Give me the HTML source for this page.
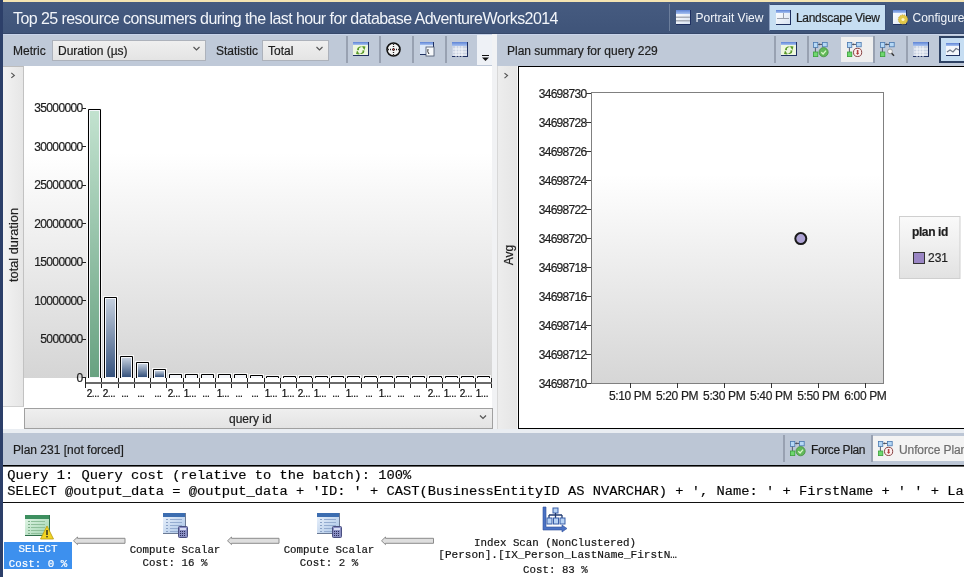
<!DOCTYPE html><html><head><meta charset="utf-8"><style>
*{margin:0;padding:0;box-sizing:border-box}
html,body{width:964px;height:577px;overflow:hidden;background:#fff;font-family:"Liberation Sans",sans-serif;font-size:12px;color:#1e1e1e}
.a{position:absolute}
.t{position:absolute;white-space:pre;line-height:1;-webkit-text-stroke:0.2px currentColor}
.mono{font-family:"Liberation Mono",monospace}
svg{position:absolute;left:0;top:0}
svg text{font-family:"Liberation Sans",sans-serif;stroke:#1e1e1e;stroke-width:0.2px}
svg text.w{stroke:#fff}
svg .m text, svg text.q{font-family:"Liberation Mono",monospace}
</style></head><body><div id="root" style="position:absolute;left:0;top:0;width:964px;height:577px;overflow:hidden;will-change:transform">
<div class="a" style="left:0px;top:0px;width:964px;height:2px;background:#f4e4b2"></div>
<div class="a" style="left:0px;top:2px;width:964px;height:32px;background:linear-gradient(#465b80,#3f5479);border-bottom:1px solid #36486a"></div>
<div class="t" style="left:13px;top:11px;font-size:16px;letter-spacing:-0.57px;color:#f2f5fa;-webkit-text-stroke:0">Top 25 resource consumers during the last hour for database AdventureWorks2014</div>
<div class="a" style="left:669px;top:4px;width:1px;height:27px;background:#6c7e9c"></div>
<div class="t" style="left:695.6px;top:12px;color:#f2f5fa;-webkit-text-stroke:0">Portrait View</div>
<div class="a" style="left:769px;top:4px;width:117px;height:27px;background:#c6def2;border:1px solid #3a5078;border-left-color:#8ea1c1"></div>
<div class="t" style="left:796px;top:12px;color:#1e1e1e;letter-spacing:-0.3px">Landscape View</div>
<div class="t" style="left:912.5px;top:12px;color:#f2f5fa;-webkit-text-stroke:0">Configure</div>
<div class="a" style="left:0px;top:34px;width:964px;height:32px;background:#bfc9d8;border-top:1px solid #c8d4ea"></div>
<div class="t" style="left:13px;top:45px;">Metric</div>
<div class="a" style="left:52px;top:40px;width:154px;height:21px;background:linear-gradient(#efefef,#e4e4e4);border:1px solid #adb2bb"></div>
<div class="t" style="left:58px;top:45px;">Duration (µs)</div>
<div class="t" style="left:216px;top:45px;">Statistic</div>
<div class="a" style="left:262px;top:40px;width:67px;height:21px;background:linear-gradient(#efefef,#e4e4e4);border:1px solid #adb2bb"></div>
<div class="t" style="left:268px;top:45px;">Total</div>
<div class="a" style="left:346px;top:36px;width:2px;height:27px;background:#98a1b1"></div>
<div class="a" style="left:379px;top:36px;width:2px;height:27px;background:#98a1b1"></div>
<div class="a" style="left:412px;top:36px;width:2px;height:27px;background:#98a1b1"></div>
<div class="a" style="left:445px;top:36px;width:2px;height:27px;background:#98a1b1"></div>
<div class="a" style="left:774px;top:36px;width:2px;height:27px;background:#98a1b1"></div>
<div class="a" style="left:807px;top:36px;width:2px;height:27px;background:#98a1b1"></div>
<div class="a" style="left:873px;top:36px;width:2px;height:27px;background:#98a1b1"></div>
<div class="a" style="left:906px;top:36px;width:2px;height:27px;background:#98a1b1"></div>
<div class="a" style="left:477px;top:35px;width:15px;height:30px;background:#eef1f6"></div>
<div class="a" style="left:492px;top:34px;width:5px;height:399px;background:#f1f2f4"></div>
<div class="t" style="left:507px;top:45px;">Plan summary for query 229</div>
<div class="a" style="left:841px;top:37px;width:32px;height:25px;background:#efefef"></div>
<div class="a" style="left:939px;top:36px;width:30px;height:27px;background:#c6ddf2;border:2px solid #2d4163"></div>
<div class="a" style="left:3px;top:66px;width:21px;height:341px;background:linear-gradient(90deg,#f2f2f2,#e6e6e6);border-top:1px solid #bdbdbd;border-right:1px solid #c2c2c2;border-bottom:1px solid #d0d0d0"></div>
<div class="a" style="left:24px;top:66px;width:468px;height:312px;background:linear-gradient(#ffffff 0%,#ffffff 28%,#d5d5d5 100%)"></div>
<div class="a" style="left:24px;top:408px;width:469px;height:21px;background:linear-gradient(#efefef,#e3e3e3);border:1px solid #a0a0a0"></div>
<div class="t" style="left:229px;top:413px;">query id</div>
<div class="a" style="left:497px;top:66px;width:21px;height:363px;background:linear-gradient(90deg,#ededed,#e5e5e5);border-left:1px solid #d8d8d8;border-right:1px solid #f6f6f6"></div>
<div class="a" style="left:518px;top:66px;width:450px;height:363px;background:#fff;border:1px solid #000;border-width:1px 0 1px 1px"></div>
<div class="a" style="left:591px;top:92px;width:293px;height:292px;background:linear-gradient(#ffffff 0%,#ffffff 28%,#d6d6d6 100%);border:1px solid #808080"></div>
<div class="a" style="left:0px;top:429px;width:964px;height:4px;background:#e9edf2"></div>
<div class="a" style="left:0px;top:433px;width:964px;height:32px;background:#bcc6d5"></div>
<div class="t" style="left:13px;top:444px;">Plan 231 [not forced]</div>
<div class="a" style="left:783px;top:435px;width:2px;height:27px;background:#98a1b1"></div>
<div class="a" style="left:871px;top:435px;width:2px;height:27px;background:#98a1b1"></div>
<div class="a" style="left:873px;top:436px;width:95px;height:25px;background:#f3f3f3"></div>
<div class="t" style="left:811px;top:444px;letter-spacing:-0.4px">Force Plan</div>
<div class="t" style="left:899px;top:444px;letter-spacing:-0.1px;color:#6d6d6d">Unforce Plan</div>
<div class="a" style="left:0px;top:465px;width:964px;height:1px;background:#000"></div>
<div class="a" style="left:0px;top:466px;width:964px;height:1px;background:#666"></div>
<div class="a" style="left:0px;top:502px;width:964px;height:1px;background:#111"></div>
<div class="a" style="left:4px;top:542px;width:68px;height:27px;background:#3d90ee"></div>
<svg width="964" height="577" viewBox="0 0 964 577"><defs>
<linearGradient id="iBlue" x1="0" y1="0" x2="0" y2="1"><stop offset="0" stop-color="#5d83d6"/><stop offset="1" stop-color="#a8c2f0"/></linearGradient>
<linearGradient id="iWin" x1="0" y1="0" x2="1" y2="1"><stop offset="0" stop-color="#ffffff"/><stop offset="1" stop-color="#d9e3f2"/></linearGradient>
<linearGradient id="iGrn" x1="0" y1="0" x2="1" y2="1"><stop offset="0" stop-color="#b6f0a0"/><stop offset="1" stop-color="#3a9a3a"/></linearGradient>
<linearGradient id="iTblG" x1="0" y1="0" x2="1" y2="1"><stop offset="0" stop-color="#e6f7ea"/><stop offset="1" stop-color="#9fd4ae"/></linearGradient>
<linearGradient id="iTblB" x1="0" y1="0" x2="1" y2="1"><stop offset="0" stop-color="#eef4fc"/><stop offset="1" stop-color="#a9c4e6"/></linearGradient>
<linearGradient id="gG" x1="0" y1="0" x2="0" y2="1"><stop offset="0" stop-color="#c2e2cf"/><stop offset="1" stop-color="#68a281"/></linearGradient><linearGradient id="gB" x1="0" y1="0" x2="0" y2="1"><stop offset="0" stop-color="#c3cedd"/><stop offset="1" stop-color="#34517c"/></linearGradient><linearGradient id="gL" x1="0" y1="0" x2="0" y2="1"><stop offset="0" stop-color="#fafafa"/><stop offset="1" stop-color="#e2e2e2"/></linearGradient></defs><g transform="translate(676 10)"><rect x="0" y="0" width="15" height="15" fill="#1f3060"/><rect x="0" y="0" width="14" height="14" fill="url(#iWin)"/><rect x="0" y="0" width="14" height="4" fill="url(#iBlue)"/><rect x="0" y="6.5" width="14" height="1.5" fill="#a9aeb8"/><rect x="0" y="10" width="14" height="1.5" fill="#a9aeb8"/></g><g transform="translate(776 10)"><rect x="0" y="0" width="15" height="15" fill="#1f3060"/><rect x="0" y="0" width="14" height="14" fill="url(#iWin)"/><rect x="0" y="0" width="14" height="3" fill="url(#iBlue)"/><rect x="1" y="8" width="12" height="1" fill="#9aa0ad"/><rect x="7" y="3" width="1" height="5" fill="#9aa0ad"/></g><g transform="translate(893 10)"><rect x="0" y="0" width="14" height="15" fill="#1f3060"/><rect x="0" y="0" width="13" height="14" fill="url(#iWin)"/><rect x="0" y="0" width="13" height="3" fill="url(#iBlue)"/><circle cx="10" cy="9.5" r="4.6" fill="#e2c84a" stroke="#c9a526" stroke-width="1" stroke-dasharray="1.2 1"/><circle cx="10" cy="9.5" r="1.6" fill="#fff6c0"/></g><g transform="translate(353 42)"><rect x="0" y="0" width="16" height="14" fill="#1f3060"/><rect x="0" y="0" width="15" height="13" fill="#eef7e0"/><rect x="0" y="0" width="15" height="3" fill="url(#iBlue)"/><path d="M4 8 A3.5 3.5 0 0 1 10 5.5 L9 4 L12.5 4.5 L11.5 8 L10.5 6.8 A2.3 2.3 0 0 0 6 8.2 Z" fill="#5a9a2a"/><path d="M11.5 8.5 A3.5 3.5 0 0 1 5.5 11 L6.5 12.5 L3 12 L4 8.5 L5 9.7 A2.3 2.3 0 0 0 9.5 8.3 Z" fill="#5a9a2a"/></g><g transform="translate(386 42)"><circle cx="7.5" cy="7.5" r="6.5" fill="#f4f4f4" stroke="#111" stroke-width="1.6"/><path d="M7.5 2 V13 M2 7.5 H13" stroke="#222" stroke-width="1.3" stroke-dasharray="1 1"/><rect x="6.8" y="6.8" width="1.4" height="1.4" fill="#d04040"/></g><g transform="translate(420 42)"><rect x="0" y="0" width="14" height="13" fill="#1f3060"/><rect x="0" y="0" width="13" height="12" fill="#dde8f8"/><rect x="0" y="0" width="13" height="3" fill="url(#iBlue)"/><rect x="6" y="5" width="8" height="9" fill="#f6f8fb" stroke="#44506a" stroke-width="0.8"/><path d="M8 7 Q7 10 9 12" stroke="#333" stroke-width="1" fill="none"/></g><g transform="translate(452 42)"><rect x="0" y="0" width="16" height="15" fill="#1f3060"/><rect x="0" y="0" width="15" height="14" fill="#c9d2e2"/><rect x="0" y="0" width="15" height="4" fill="url(#iBlue)"/><path d="M1 7H15 M1 10H15 M1 13H15 M4 4V15 M7 4V15 M10 4V15" stroke="#f4f6fa" stroke-width="1"/></g><g transform="translate(781 42)"><rect x="0" y="0" width="16" height="14" fill="#1f3060"/><rect x="0" y="0" width="15" height="13" fill="#eef7e0"/><rect x="0" y="0" width="15" height="3" fill="url(#iBlue)"/><path d="M4 8 A3.5 3.5 0 0 1 10 5.5 L9 4 L12.5 4.5 L11.5 8 L10.5 6.8 A2.3 2.3 0 0 0 6 8.2 Z" fill="#5a9a2a"/><path d="M11.5 8.5 A3.5 3.5 0 0 1 5.5 11 L6.5 12.5 L3 12 L4 8.5 L5 9.7 A2.3 2.3 0 0 0 9.5 8.3 Z" fill="#5a9a2a"/></g><g transform="translate(813 42)"><rect x="0.4" y="0.4" width="4.4" height="5" fill="#b5d8f6" stroke="#4a78b0" stroke-width="0.8"/><rect x="9.4" y="0.4" width="4.8" height="4.4" fill="#b5d8f6" stroke="#4a78b0" stroke-width="0.8"/><path d="M5.2 2.4 H9" stroke="#4a5060" stroke-width="1"/><path d="M5.3 2.4 L6.8 1.2 V3.6 Z" fill="#4a5060"/><path d="M2.4 5.6 V10" stroke="#5a6070" stroke-width="1"/><rect x="0.4" y="10" width="4.4" height="4.6" fill="#6fd86f" stroke="#3aa03a" stroke-width="0.8"/><circle cx="10.6" cy="10.2" r="4.6" fill="#62b85a" stroke="#3f8a3a" stroke-width="0.7"/><path d="M8.3 10.2 L10.1 12 L13 8.6" stroke="#d8f8c8" stroke-width="1.3" fill="none"/></g><g transform="translate(847 42)"><rect x="0.4" y="0.4" width="4.4" height="5" fill="#b5d8f6" stroke="#4a78b0" stroke-width="0.8"/><rect x="9.4" y="0.4" width="4.8" height="4.4" fill="#b5d8f6" stroke="#4a78b0" stroke-width="0.8"/><path d="M5.2 2.4 H9" stroke="#4a5060" stroke-width="1"/><path d="M5.3 2.4 L6.8 1.2 V3.6 Z" fill="#4a5060"/><path d="M2.4 5.6 V10" stroke="#5a6070" stroke-width="1"/><rect x="0.4" y="10" width="4.4" height="4.6" fill="#6fd86f" stroke="#3aa03a" stroke-width="0.8"/><circle cx="10.6" cy="10.4" r="4.1" fill="#fdf0f0" stroke="#7a3030" stroke-width="0.9"/><path d="M10.6 8 V11.5" stroke="#b04040" stroke-width="1.6"/><path d="M9 11 L10.6 13 L12.2 11 Z" fill="#b04040"/></g><g transform="translate(880 42)"><rect x="0.4" y="0.4" width="4.4" height="5" fill="#b5d8f6" stroke="#4a78b0" stroke-width="0.8"/><rect x="9.4" y="0.4" width="4.8" height="4.4" fill="#b5d8f6" stroke="#4a78b0" stroke-width="0.8"/><path d="M5.2 2.4 H9" stroke="#4a5060" stroke-width="1"/><path d="M5.3 2.4 L6.8 1.2 V3.6 Z" fill="#4a5060"/><path d="M2.4 5.6 V10" stroke="#5a6070" stroke-width="1"/><rect x="0.4" y="10" width="4.4" height="4.6" fill="#6fd86f" stroke="#3aa03a" stroke-width="0.8"/><circle cx="10" cy="9.4" r="2.4" fill="#f4f4f4" stroke="#9a9a9a" stroke-width="0.9"/><path d="M11.6 11.2 L14 13.8" stroke="#333" stroke-width="1.5"/></g><g transform="translate(913 42)"><rect x="0" y="0" width="16" height="15" fill="#1f3060"/><rect x="0" y="0" width="15" height="14" fill="#c9d2e2"/><rect x="0" y="0" width="15" height="4" fill="url(#iBlue)"/><path d="M1 7H15 M1 10H15 M1 13H15 M4 4V15 M7 4V15 M10 4V15" stroke="#f4f6fa" stroke-width="1"/></g><g transform="translate(946 43)"><rect x="0" y="0" width="14" height="13" fill="#1f3060"/><rect x="0" y="0" width="13" height="12" fill="#f3f6fb"/><rect x="0" y="0" width="13" height="3" fill="url(#iBlue)"/><path d="M1 9 L4 7 L7 9 L10 5.5 L13 7" stroke="#707888" stroke-width="1.2" fill="none"/></g><g transform="translate(790 441)"><rect x="0.4" y="0.4" width="4.4" height="5" fill="#b5d8f6" stroke="#4a78b0" stroke-width="0.8"/><rect x="9.4" y="0.4" width="4.8" height="4.4" fill="#b5d8f6" stroke="#4a78b0" stroke-width="0.8"/><path d="M5.2 2.4 H9" stroke="#4a5060" stroke-width="1"/><path d="M5.3 2.4 L6.8 1.2 V3.6 Z" fill="#4a5060"/><path d="M2.4 5.6 V10" stroke="#5a6070" stroke-width="1"/><rect x="0.4" y="10" width="4.4" height="4.6" fill="#6fd86f" stroke="#3aa03a" stroke-width="0.8"/><circle cx="10.6" cy="10.2" r="4.6" fill="#62b85a" stroke="#3f8a3a" stroke-width="0.7"/><path d="M8.3 10.2 L10.1 12 L13 8.6" stroke="#d8f8c8" stroke-width="1.3" fill="none"/></g><g transform="translate(878 441)"><rect x="0.4" y="0.4" width="4.4" height="5" fill="#b5d8f6" stroke="#4a78b0" stroke-width="0.8"/><rect x="9.4" y="0.4" width="4.8" height="4.4" fill="#b5d8f6" stroke="#4a78b0" stroke-width="0.8"/><path d="M5.2 2.4 H9" stroke="#4a5060" stroke-width="1"/><path d="M5.3 2.4 L6.8 1.2 V3.6 Z" fill="#4a5060"/><path d="M2.4 5.6 V10" stroke="#5a6070" stroke-width="1"/><rect x="0.4" y="10" width="4.4" height="4.6" fill="#6fd86f" stroke="#3aa03a" stroke-width="0.8"/><circle cx="10.6" cy="10.4" r="4.1" fill="#fdf0f0" stroke="#7a3030" stroke-width="0.9"/><path d="M10.6 8 V11.5" stroke="#b04040" stroke-width="1.6"/><path d="M9 11 L10.6 13 L12.2 11 Z" fill="#b04040"/></g><path d="M193.5 47.0 L196.5 50.0 L199.5 47.0" stroke="#555" stroke-width="1.2" fill="none"/><path d="M316.5 47.0 L319.5 50.0 L322.5 47.0" stroke="#555" stroke-width="1.2" fill="none"/><path d="M480 415.5 L483 418.5 L486 415.5" stroke="#555" stroke-width="1.2" fill="none"/><path d="M11.3 72.9 L14.3 75.4 L11.3 77.9" stroke="#555" stroke-width="1.2" fill="none"/><path d="M504.5 73.1 L507.5 75.6 L504.5 78.1" stroke="#555" stroke-width="1.2" fill="none"/><rect x="482" y="55" width="7" height="1" fill="#111"/><path d="M482 57.5 H489 L485.5 61 Z" fill="#111"/><g font-size="12" fill="#1e1e1e" letter-spacing="-0.65"><text x="82.5" y="112.3" text-anchor="end">35000000</text><rect x="82" y="108" width="4" height="1" fill="#222"/><text x="82.5" y="150.8" text-anchor="end">30000000</text><rect x="82" y="146" width="4" height="1" fill="#222"/><text x="82.5" y="189.3" text-anchor="end">25000000</text><rect x="82" y="185" width="4" height="1" fill="#222"/><text x="82.5" y="227.8" text-anchor="end">20000000</text><rect x="82" y="223" width="4" height="1" fill="#222"/><text x="82.5" y="266.3" text-anchor="end">15000000</text><rect x="82" y="262" width="4" height="1" fill="#222"/><text x="82.5" y="304.8" text-anchor="end">10000000</text><rect x="82" y="300" width="4" height="1" fill="#222"/><text x="82.5" y="343.3" text-anchor="end">5000000</text><rect x="82" y="339" width="4" height="1" fill="#222"/><text x="82.5" y="381.8" text-anchor="end">0</text><rect x="82" y="377" width="4" height="1" fill="#222"/></g><rect x="87" y="108" width="15" height="270" fill="#fbfbfb" opacity="0.85"/><path d="M88.5 378 V109.5 H100.5 V378" fill="none" stroke="#000" stroke-width="1"/><rect x="89" y="110" width="11" height="268" fill="#f4f6fa"/><rect x="90" y="111" width="9" height="266" fill="url(#gG)"/><rect x="85" y="378" width="1" height="10" fill="#222"/><text x="92.9" y="397.2" text-anchor="middle" font-size="10" letter-spacing="-0.35" fill="#000">2...</text><rect x="103" y="296" width="15" height="82" fill="#fbfbfb" opacity="0.85"/><path d="M104.5 378 V297.5 H116.5 V378" fill="none" stroke="#000" stroke-width="1"/><rect x="105" y="298" width="11" height="80" fill="#f4f6fa"/><rect x="106" y="299" width="9" height="78" fill="url(#gB)"/><rect x="101" y="378" width="1" height="10" fill="#222"/><text x="108.9" y="397.2" text-anchor="middle" font-size="10" letter-spacing="-0.35" fill="#000">2...</text><rect x="119" y="355" width="15" height="23" fill="#fbfbfb" opacity="0.85"/><path d="M120.5 378 V356.5 H132.5 V378" fill="none" stroke="#000" stroke-width="1"/><rect x="121" y="357" width="11" height="21" fill="#f4f6fa"/><rect x="122" y="358" width="9" height="19" fill="url(#gB)"/><rect x="118" y="378" width="1" height="10" fill="#222"/><text x="124.9" y="397.2" text-anchor="middle" font-size="10" letter-spacing="-0.35" fill="#000">...</text><rect x="135" y="361" width="15" height="17" fill="#fbfbfb" opacity="0.85"/><path d="M136.5 378 V362.5 H148.5 V378" fill="none" stroke="#000" stroke-width="1"/><rect x="137" y="363" width="11" height="15" fill="#f4f6fa"/><rect x="138" y="364" width="9" height="13" fill="url(#gB)"/><rect x="134" y="378" width="1" height="10" fill="#222"/><text x="140.9" y="397.2" text-anchor="middle" font-size="10" letter-spacing="-0.35" fill="#000">...</text><rect x="152" y="368" width="15" height="10" fill="#fbfbfb" opacity="0.85"/><path d="M153.5 378 V369.5 H165.5 V378" fill="none" stroke="#000" stroke-width="1"/><rect x="154" y="370" width="11" height="8" fill="#f4f6fa"/><rect x="155" y="371" width="9" height="6" fill="url(#gB)"/><rect x="150" y="378" width="1" height="10" fill="#222"/><text x="157.9" y="397.2" text-anchor="middle" font-size="10" letter-spacing="-0.35" fill="#000">...</text><rect x="168" y="373" width="15" height="5" fill="#fbfbfb" opacity="0.85"/><path d="M169.5 378 V374.5 H181.5 V378" fill="none" stroke="#000" stroke-width="1"/><rect x="170" y="375" width="11" height="3" fill="#f4f6fa"/><rect x="166" y="378" width="1" height="10" fill="#222"/><text x="173.9" y="397.2" text-anchor="middle" font-size="10" letter-spacing="-0.35" fill="#000">2...</text><rect x="184" y="373" width="15" height="5" fill="#fbfbfb" opacity="0.85"/><path d="M185.5 378 V374.5 H197.5 V378" fill="none" stroke="#000" stroke-width="1"/><rect x="186" y="375" width="11" height="3" fill="#f4f6fa"/><rect x="183" y="378" width="1" height="10" fill="#222"/><text x="189.9" y="397.2" text-anchor="middle" font-size="10" letter-spacing="-0.35" fill="#000">1...</text><rect x="200" y="373" width="15" height="5" fill="#fbfbfb" opacity="0.85"/><path d="M201.5 378 V374.5 H213.5 V378" fill="none" stroke="#000" stroke-width="1"/><rect x="202" y="375" width="11" height="3" fill="#f4f6fa"/><rect x="199" y="378" width="1" height="10" fill="#222"/><text x="205.9" y="397.2" text-anchor="middle" font-size="10" letter-spacing="-0.35" fill="#000">...</text><rect x="217" y="373" width="15" height="5" fill="#fbfbfb" opacity="0.85"/><path d="M218.5 378 V374.5 H230.5 V378" fill="none" stroke="#000" stroke-width="1"/><rect x="219" y="375" width="11" height="3" fill="#f4f6fa"/><rect x="215" y="378" width="1" height="10" fill="#222"/><text x="222.9" y="397.2" text-anchor="middle" font-size="10" letter-spacing="-0.35" fill="#000">1...</text><rect x="233" y="373" width="15" height="5" fill="#fbfbfb" opacity="0.85"/><path d="M234.5 378 V374.5 H246.5 V378" fill="none" stroke="#000" stroke-width="1"/><rect x="235" y="375" width="11" height="3" fill="#f4f6fa"/><rect x="231" y="378" width="1" height="10" fill="#222"/><text x="238.9" y="397.2" text-anchor="middle" font-size="10" letter-spacing="-0.35" fill="#000">...</text><rect x="249" y="374" width="15" height="4" fill="#fbfbfb" opacity="0.85"/><path d="M250.5 378 V375.5 H262.5 V378" fill="none" stroke="#000" stroke-width="1"/><rect x="251" y="376" width="11" height="2" fill="#f4f6fa"/><rect x="247" y="378" width="1" height="10" fill="#222"/><text x="254.9" y="397.2" text-anchor="middle" font-size="10" letter-spacing="-0.35" fill="#000">...</text><rect x="265" y="375" width="15" height="3" fill="#fbfbfb" opacity="0.85"/><path d="M266.5 378 V376.5 H278.5 V378" fill="none" stroke="#000" stroke-width="1"/><rect x="267" y="377" width="11" height="1" fill="#f4f6fa"/><rect x="264" y="378" width="1" height="10" fill="#222"/><text x="270.9" y="397.2" text-anchor="middle" font-size="10" letter-spacing="-0.35" fill="#000">1...</text><rect x="282" y="375" width="15" height="3" fill="#fbfbfb" opacity="0.85"/><path d="M283.5 378 V376.5 H295.5 V378" fill="none" stroke="#000" stroke-width="1"/><rect x="284" y="377" width="11" height="1" fill="#f4f6fa"/><rect x="280" y="378" width="1" height="10" fill="#222"/><text x="287.9" y="397.2" text-anchor="middle" font-size="10" letter-spacing="-0.35" fill="#000">1...</text><rect x="298" y="375" width="15" height="3" fill="#fbfbfb" opacity="0.85"/><path d="M299.5 378 V376.5 H311.5 V378" fill="none" stroke="#000" stroke-width="1"/><rect x="300" y="377" width="11" height="1" fill="#f4f6fa"/><rect x="296" y="378" width="1" height="10" fill="#222"/><text x="303.9" y="397.2" text-anchor="middle" font-size="10" letter-spacing="-0.35" fill="#000">2...</text><rect x="314" y="375" width="15" height="3" fill="#fbfbfb" opacity="0.85"/><path d="M315.5 378 V376.5 H327.5 V378" fill="none" stroke="#000" stroke-width="1"/><rect x="316" y="377" width="11" height="1" fill="#f4f6fa"/><rect x="312" y="378" width="1" height="10" fill="#222"/><text x="319.9" y="397.2" text-anchor="middle" font-size="10" letter-spacing="-0.35" fill="#000">1...</text><rect x="330" y="375" width="15" height="3" fill="#fbfbfb" opacity="0.85"/><path d="M331.5 378 V376.5 H343.5 V378" fill="none" stroke="#000" stroke-width="1"/><rect x="332" y="377" width="11" height="1" fill="#f4f6fa"/><rect x="329" y="378" width="1" height="10" fill="#222"/><text x="335.9" y="397.2" text-anchor="middle" font-size="10" letter-spacing="-0.35" fill="#000">...</text><rect x="346" y="375" width="15" height="3" fill="#fbfbfb" opacity="0.85"/><path d="M347.5 378 V376.5 H359.5 V378" fill="none" stroke="#000" stroke-width="1"/><rect x="348" y="377" width="11" height="1" fill="#f4f6fa"/><rect x="345" y="378" width="1" height="10" fill="#222"/><text x="351.9" y="397.2" text-anchor="middle" font-size="10" letter-spacing="-0.35" fill="#000">1...</text><rect x="363" y="375" width="15" height="3" fill="#fbfbfb" opacity="0.85"/><path d="M364.5 378 V376.5 H376.5 V378" fill="none" stroke="#000" stroke-width="1"/><rect x="365" y="377" width="11" height="1" fill="#f4f6fa"/><rect x="361" y="378" width="1" height="10" fill="#222"/><text x="368.9" y="397.2" text-anchor="middle" font-size="10" letter-spacing="-0.35" fill="#000">...</text><rect x="379" y="375" width="15" height="3" fill="#fbfbfb" opacity="0.85"/><path d="M380.5 378 V376.5 H392.5 V378" fill="none" stroke="#000" stroke-width="1"/><rect x="381" y="377" width="11" height="1" fill="#f4f6fa"/><rect x="377" y="378" width="1" height="10" fill="#222"/><text x="384.9" y="397.2" text-anchor="middle" font-size="10" letter-spacing="-0.35" fill="#000">1...</text><rect x="395" y="375" width="15" height="3" fill="#fbfbfb" opacity="0.85"/><path d="M396.5 378 V376.5 H408.5 V378" fill="none" stroke="#000" stroke-width="1"/><rect x="397" y="377" width="11" height="1" fill="#f4f6fa"/><rect x="394" y="378" width="1" height="10" fill="#222"/><text x="400.9" y="397.2" text-anchor="middle" font-size="10" letter-spacing="-0.35" fill="#000">...</text><rect x="411" y="375" width="15" height="3" fill="#fbfbfb" opacity="0.85"/><path d="M412.5 378 V376.5 H424.5 V378" fill="none" stroke="#000" stroke-width="1"/><rect x="413" y="377" width="11" height="1" fill="#f4f6fa"/><rect x="410" y="378" width="1" height="10" fill="#222"/><text x="416.9" y="397.2" text-anchor="middle" font-size="10" letter-spacing="-0.35" fill="#000">...</text><rect x="428" y="375" width="15" height="3" fill="#fbfbfb" opacity="0.85"/><path d="M429.5 378 V376.5 H441.5 V378" fill="none" stroke="#000" stroke-width="1"/><rect x="430" y="377" width="11" height="1" fill="#f4f6fa"/><rect x="426" y="378" width="1" height="10" fill="#222"/><text x="433.9" y="397.2" text-anchor="middle" font-size="10" letter-spacing="-0.35" fill="#000">2...</text><rect x="444" y="375" width="15" height="3" fill="#fbfbfb" opacity="0.85"/><path d="M445.5 378 V376.5 H457.5 V378" fill="none" stroke="#000" stroke-width="1"/><rect x="446" y="377" width="11" height="1" fill="#f4f6fa"/><rect x="442" y="378" width="1" height="10" fill="#222"/><text x="449.9" y="397.2" text-anchor="middle" font-size="10" letter-spacing="-0.35" fill="#000">1...</text><rect x="460" y="375" width="15" height="3" fill="#fbfbfb" opacity="0.85"/><path d="M461.5 378 V376.5 H473.5 V378" fill="none" stroke="#000" stroke-width="1"/><rect x="462" y="377" width="11" height="1" fill="#f4f6fa"/><rect x="459" y="378" width="1" height="10" fill="#222"/><text x="465.9" y="397.2" text-anchor="middle" font-size="10" letter-spacing="-0.35" fill="#000">2...</text><rect x="476" y="375" width="15" height="3" fill="#fbfbfb" opacity="0.85"/><path d="M477.5 378 V376.5 H489.5 V378" fill="none" stroke="#000" stroke-width="1"/><rect x="478" y="377" width="11" height="1" fill="#f4f6fa"/><rect x="475" y="378" width="1" height="10" fill="#222"/><text x="481.9" y="397.2" text-anchor="middle" font-size="10" letter-spacing="-0.35" fill="#000">1...</text><rect x="491" y="378" width="1" height="10" fill="#222"/><rect x="86" y="382" width="406" height="2" fill="#6a6a6a"/><text x="18.3" y="245" font-size="12.8" text-anchor="middle" transform="rotate(-90 18.3 245)" fill="#1e1e1e">total duration</text><text x="513" y="255" font-size="12" text-anchor="middle" transform="rotate(-90 513 255)" fill="#1e1e1e">Avg</text><g font-size="12" fill="#1e1e1e" letter-spacing="-0.7"><text x="586.5" y="97.8" text-anchor="end">34698730</text><rect x="586" y="93" width="5" height="1" fill="#333"/><text x="586.5" y="126.8" text-anchor="end">34698728</text><rect x="586" y="122" width="5" height="1" fill="#333"/><text x="586.5" y="155.8" text-anchor="end">34698726</text><rect x="586" y="151" width="5" height="1" fill="#333"/><text x="586.5" y="184.8" text-anchor="end">34698724</text><rect x="586" y="180" width="5" height="1" fill="#333"/><text x="586.5" y="213.8" text-anchor="end">34698722</text><rect x="586" y="209" width="5" height="1" fill="#333"/><text x="586.5" y="242.8" text-anchor="end">34698720</text><rect x="586" y="238" width="5" height="1" fill="#333"/><text x="586.5" y="271.8" text-anchor="end">34698718</text><rect x="586" y="267" width="5" height="1" fill="#333"/><text x="586.5" y="300.8" text-anchor="end">34698716</text><rect x="586" y="296" width="5" height="1" fill="#333"/><text x="586.5" y="329.8" text-anchor="end">34698714</text><rect x="586" y="325" width="5" height="1" fill="#333"/><text x="586.5" y="358.8" text-anchor="end">34698712</text><rect x="586" y="354" width="5" height="1" fill="#333"/><text x="586.5" y="387.8" text-anchor="end">34698710</text><rect x="586" y="383" width="5" height="1" fill="#333"/><rect x="630" y="383" width="1" height="5" fill="#333"/><text x="630.0" y="400" text-anchor="middle" letter-spacing="-0.35">5:10 PM</text><rect x="677" y="383" width="1" height="5" fill="#333"/><text x="677.1" y="400" text-anchor="middle" letter-spacing="-0.35">5:20 PM</text><rect x="724" y="383" width="1" height="5" fill="#333"/><text x="724.2" y="400" text-anchor="middle" letter-spacing="-0.35">5:30 PM</text><rect x="771" y="383" width="1" height="5" fill="#333"/><text x="771.2" y="400" text-anchor="middle" letter-spacing="-0.35">5:40 PM</text><rect x="818" y="383" width="1" height="5" fill="#333"/><text x="818.3" y="400" text-anchor="middle" letter-spacing="-0.35">5:50 PM</text><rect x="865" y="383" width="1" height="5" fill="#333"/><text x="865.4" y="400" text-anchor="middle" letter-spacing="-0.35">6:00 PM</text></g><circle cx="800.8" cy="238.6" r="5.5" fill="#ada2d4" stroke="#1a1a1a" stroke-width="2"/><rect x="899.5" y="216.5" width="60.5" height="62" fill="url(#gL)" stroke="#cfcfcf"/><text x="912" y="236" font-size="12" font-weight="bold" letter-spacing="-0.4" fill="#1e1e1e">plan id</text><rect x="913.5" y="252.5" width="11" height="11" fill="#9a86c4" stroke="#333"/><text x="928" y="262" font-size="12" fill="#1e1e1e">231</text><text class="q" x="7.3" y="479" transform="translate(0 479) scale(1 0.92) translate(0 -479)" font-size="13.75" fill="#000" stroke="#000" stroke-width="0.08">Query 1: Query cost (relative to the batch): 100%</text><text class="q" x="7.3" y="495" transform="translate(0 495) scale(1 0.92) translate(0 -495)" font-size="13.75" fill="#000" stroke="#000" stroke-width="0.08">SELECT @output_data = @output_data + 'ID: ' + CAST(BusinessEntityID AS NVARCHAR) + ', Name: ' + FirstName + ' ' + LastName</text><g transform="translate(25 515)"><rect x="0" y="0" width="25" height="21" fill="#2f6e4a"/><rect x="0" y="0" width="24" height="20" fill="url(#iTblG)"/><rect x="0" y="0" width="24" height="4" fill="#3d8f5f"/><rect x="3" y="6" width="2" height="1" fill="#7fae8a"/><rect x="6" y="6" width="14" height="1" fill="#8fbf9a"/><rect x="3" y="9" width="2" height="1" fill="#7fae8a"/><rect x="6" y="9" width="14" height="1" fill="#8fbf9a"/><rect x="3" y="12" width="2" height="1" fill="#7fae8a"/><rect x="6" y="12" width="14" height="1" fill="#8fbf9a"/><rect x="3" y="15" width="2" height="1" fill="#7fae8a"/><rect x="6" y="15" width="14" height="1" fill="#8fbf9a"/><rect x="3" y="18" width="2" height="1" fill="#7fae8a"/><rect x="6" y="18" width="14" height="1" fill="#8fbf9a"/><path d="M22 11 L28.5 24 L15.5 24 Z" fill="#f2d423" stroke="#b89a10" stroke-width="0.8"/><rect x="21.3" y="15" width="1.4" height="5" fill="#222"/><rect x="21.3" y="21" width="1.4" height="1.4" fill="#222"/></g><g transform="translate(163 513)"><rect x="0" y="0" width="23" height="21" fill="#6b7a94"/><rect x="0" y="0" width="22" height="20" fill="url(#iTblB)"/><rect x="0" y="0" width="22" height="4" fill="#3c6db0"/><rect x="3" y="6" width="2" height="1" fill="#8aa2c6"/><rect x="7" y="6" width="12" height="1" fill="#94acd0"/><rect x="3" y="9" width="2" height="1" fill="#8aa2c6"/><rect x="7" y="9" width="12" height="1" fill="#94acd0"/><rect x="3" y="12" width="2" height="1" fill="#8aa2c6"/><rect x="7" y="12" width="12" height="1" fill="#94acd0"/><rect x="3" y="15" width="2" height="1" fill="#8aa2c6"/><rect x="7" y="15" width="12" height="1" fill="#94acd0"/><rect x="3" y="18" width="2" height="1" fill="#8aa2c6"/><rect x="7" y="18" width="12" height="1" fill="#94acd0"/><rect x="15.5" y="13.5" width="9" height="11" rx="1" fill="#8a8fc4" stroke="#4a4f80"/><rect x="17" y="15" width="6" height="2" fill="#d8dcf4"/><rect x="17" y="18" width="1" height="1" fill="#2a2e5a"/><rect x="19" y="18" width="1" height="1" fill="#2a2e5a"/><rect x="21" y="18" width="1" height="1" fill="#2a2e5a"/><rect x="17" y="20" width="1" height="1" fill="#2a2e5a"/><rect x="19" y="20" width="1" height="1" fill="#2a2e5a"/><rect x="21" y="20" width="1" height="1" fill="#2a2e5a"/><rect x="17" y="22" width="1" height="1" fill="#2a2e5a"/><rect x="19" y="22" width="1" height="1" fill="#2a2e5a"/><rect x="21" y="22" width="1" height="1" fill="#2a2e5a"/></g><g transform="translate(317 513)"><rect x="0" y="0" width="23" height="21" fill="#6b7a94"/><rect x="0" y="0" width="22" height="20" fill="url(#iTblB)"/><rect x="0" y="0" width="22" height="4" fill="#3c6db0"/><rect x="3" y="6" width="2" height="1" fill="#8aa2c6"/><rect x="7" y="6" width="12" height="1" fill="#94acd0"/><rect x="3" y="9" width="2" height="1" fill="#8aa2c6"/><rect x="7" y="9" width="12" height="1" fill="#94acd0"/><rect x="3" y="12" width="2" height="1" fill="#8aa2c6"/><rect x="7" y="12" width="12" height="1" fill="#94acd0"/><rect x="3" y="15" width="2" height="1" fill="#8aa2c6"/><rect x="7" y="15" width="12" height="1" fill="#94acd0"/><rect x="3" y="18" width="2" height="1" fill="#8aa2c6"/><rect x="7" y="18" width="12" height="1" fill="#94acd0"/><rect x="15.5" y="13.5" width="9" height="11" rx="1" fill="#8a8fc4" stroke="#4a4f80"/><rect x="17" y="15" width="6" height="2" fill="#d8dcf4"/><rect x="17" y="18" width="1" height="1" fill="#2a2e5a"/><rect x="19" y="18" width="1" height="1" fill="#2a2e5a"/><rect x="21" y="18" width="1" height="1" fill="#2a2e5a"/><rect x="17" y="20" width="1" height="1" fill="#2a2e5a"/><rect x="19" y="20" width="1" height="1" fill="#2a2e5a"/><rect x="21" y="20" width="1" height="1" fill="#2a2e5a"/><rect x="17" y="22" width="1" height="1" fill="#2a2e5a"/><rect x="19" y="22" width="1" height="1" fill="#2a2e5a"/><rect x="21" y="22" width="1" height="1" fill="#2a2e5a"/></g><g transform="translate(543 507)"><path d="M0 0 H3 V20 H19 V18 L24 21.5 L19 25 V23 H0 Z" fill="#4a72c4" stroke="#2d4f9a" stroke-width="0.6"/><rect x="10" y="1" width="5" height="5" fill="#b6d2f4" stroke="#3a5fa8"/><path d="M12.5 6 V8 M6 8 H19 M6 8V11 M12.5 8V11 M19 8V11" stroke="#203a70" stroke-width="1.3" fill="none"/><rect x="4" y="11" width="5" height="6" fill="#b6d2f4" stroke="#3a5fa8"/><rect x="10.5" y="11" width="5" height="6" fill="#b6d2f4" stroke="#3a5fa8"/><rect x="17" y="11" width="5" height="6" fill="#b6d2f4" stroke="#3a5fa8"/></g><path d="M73.5 540.8 L77.5 537.0 V538.3 H125 V543.3 H77.5 V544.5999999999999 Z" fill="#dedede" stroke="#8c8c8c" stroke-width="1"/><path d="M227.5 540.8 L231.5 537.0 V538.3 H279 V543.3 H231.5 V544.5999999999999 Z" fill="#dedede" stroke="#8c8c8c" stroke-width="1"/><path d="M381.5 540.8 L385.5 537.0 V538.3 H433.5 V543.3 H385.5 V544.5999999999999 Z" fill="#dedede" stroke="#8c8c8c" stroke-width="1"/><g class="m" font-size="10.8" text-anchor="middle" fill="#111"><text class="w" x="38" y="552" fill="#fff">SELECT</text><text class="w" x="38" y="566.5" fill="#fff">Cost: 0 %</text><text x="175" y="552.5">Compute Scalar</text><text x="175" y="566">Cost: 16 %</text><text x="329" y="552.5">Compute Scalar</text><text x="329" y="566">Cost: 2 %</text><text x="555" y="546">Index Scan (NonClustered)</text><text x="557.6" y="557.5" font-size="11.05">[Person].[IX_Person_LastName_FirstN…</text><text x="555.4" y="573">Cost: 83 %</text></g></svg>
<div class="a" style="left:0px;top:0px;width:3px;height:577px;background:#2c3f69"></div>
</div></body></html>
